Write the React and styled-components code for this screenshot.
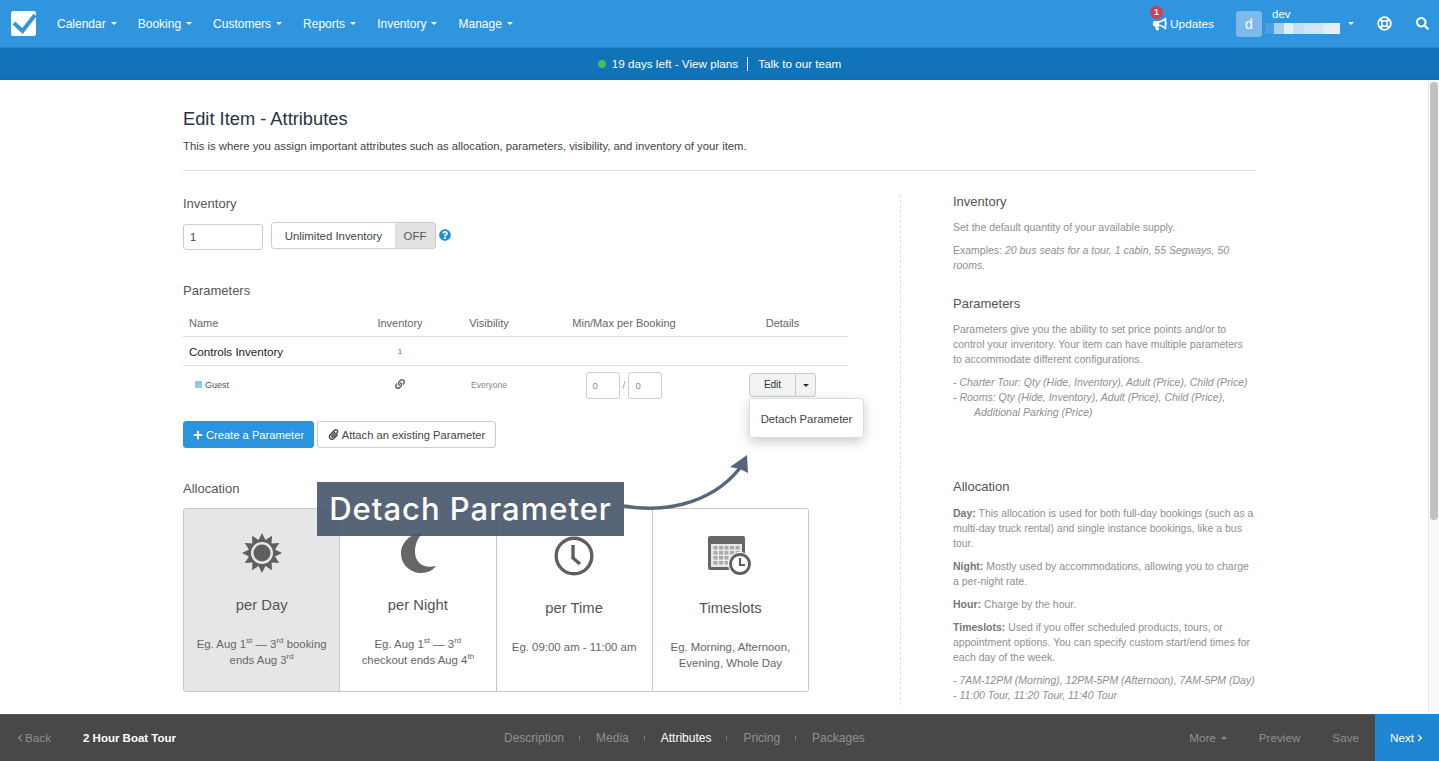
import React from "react";
import styled, { createGlobalStyle } from "styled-components";
import { FaBullhorn, FaLink, FaPaperclip, FaQuestionCircle, FaSearch, FaPlus, FaChevronLeft, FaChevronRight } from "react-icons/fa";

const GlobalStyle = createGlobalStyle`
	html, body {
		margin: 0;
		height: 100%;
		overflow: hidden;
		font-family: "Liberation Sans", Arial, sans-serif;
		color: #333;
		background: #fff;
	}
	#root { height: 100%; }
	* { box-sizing: border-box; }
`;

const Page = styled.div`
	height: 761px;
	display: flex;
	flex-direction: column;
`;

const TopBar = styled.header`
	height: 47px;
	flex: none;
	display: flex;
	align-items: center;
	background: #2f95de;
	color: #fff;
	font-size: 12px;
`;

const Logo = styled.svg`
	width: 25px;
	height: 25px;
	margin-left: 11px;
	margin-right: 21px;
`;

const MainNav = styled.nav`
	display: flex;
	gap: 21px;
`;

const NavItem = styled.span`
	display: flex;
	align-items: center;
	gap: 5px;
`;

const Caret = styled.i`
	display: inline-block;
	width: 0;
	height: 0;
	border-left: 3px solid transparent;
	border-right: 3px solid transparent;
	border-top: 3px solid ${(p) => p.$color || "currentColor"};
	${(p) => p.$up && `border-top: none; border-bottom: 3px solid ${p.$color || "currentColor"};`}
`;

const NavRight = styled.div`
	margin-left: auto;
	display: flex;
	align-items: center;
`;

const Updates = styled.span`
	position: relative;
	display: flex;
	align-items: center;
	gap: 3px;
	margin-right: 22px;
	font-size: 11.8px;
`;

const Badge = styled.b`
	position: absolute;
	left: -3px;
	top: -11px;
	width: 13px;
	height: 13px;
	border-radius: 50%;
	background: #d43f4f;
	font-size: 9px;
	line-height: 13px;
	text-align: center;
`;

const Avatar = styled.span`
	width: 26px;
	height: 26px;
	border-radius: 3px;
	background: #7db9ea;
	font-size: 14px;
	line-height: 26px;
	text-align: center;
	margin-right: 3px;
`;

const UserBlock = styled.div`
	width: 75px;
	display: flex;
	flex-direction: column;
	gap: 3px;
	font-size: 11.5px;
	margin-right: 8px;
`;

const UserName = styled.span`
	line-height: 12px;
	margin-top: -5px;
	padding-left: 7px;
`;

const BlurredEmail = styled.span`
	height: 11px;
	background: linear-gradient(90deg, #4b9fe0 0 12%, #a9d0f0 12% 25%, #e4effa 25% 38%, #c7ddf3 38% 52%, #d3e4f5 52% 77%, #e4effa 77% 100%);
`;

const NavIconButton = styled.span`
	display: flex;
	margin-left: ${(p) => p.$gap}px;
	margin-right: ${(p) => p.$end || 0}px;
`;

const TrialBar = styled.div`
	height: 33px;
	flex: none;
	display: flex;
	align-items: center;
	justify-content: center;
	background: #1174b8;
	border-top: 1px solid #2a81c3;
	border-bottom: 1px solid #0a6db5;
	color: #fff;
	font-size: 11.7px;
`;

const Dot = styled.i`
	width: 8px;
	height: 8px;
	border-radius: 50%;
	background: #3fc25a;
	margin-right: 6px;
`;

const TrialLink = styled.span`
	padding: ${(p) => (p.$last ? "0 0 0 10px" : "0 9px 0 0")};
	${(p) => !p.$last && "border-right: 1px solid #fff;"}
	line-height: 14px;
`;

const ContentArea = styled.main`
	flex: 1;
	min-height: 0;
	position: relative;
	overflow: hidden;
	padding: 0 184px 0 183px;
`;

const ScrollTrack = styled.div`
	position: absolute;
	right: 0;
	top: 0;
	bottom: 0;
	width: 11px;
	background: #fafafa;
	border-left: 1px solid #e8e8e8;
`;

const ScrollThumb = styled.div`
	margin: 2px 1px 0 1px;
	height: 438px;
	border-radius: 4px;
	background: #c2c2c2;
`;

const PageHeader = styled.div`
	padding-top: 29px;
	height: 91px;
	border-bottom: 1px solid #ddd;
`;

const Title = styled.h1`
	margin: 0;
	font-size: 18.3px;
	line-height: 20px;
	font-weight: 400;
	color: #2a3342;
`;

const Subtitle = styled.p`
	margin: 10px 0 0;
	font-size: 11.3px;
	line-height: 14px;
	color: #444;
`;

const Columns = styled.div`
	display: flex;
	margin-top: 24px;
`;

const FormColumn = styled.div`
	width: 718px;
	flex: none;
	padding-right: 52px;
	border-right: 1px dashed #ddd;
	height: 510px;
`;

const HelpColumn = styled.aside`
	flex: 1;
	margin-top: -1px;
	padding-left: 52px;
	font-size: 10.5px;
	line-height: 15px;
	color: #8f8f8f;
`;

const SectionLabel = styled.h2`
	margin: ${(p) => p.$top || 0}px 0 0;
	font-size: 13px;
	line-height: 16px;
	font-weight: 400;
	color: #555;
`;

const InventoryRow = styled.div`
	display: flex;
	align-items: center;
	margin-top: 12px;
`;

const TextInput = styled.div`
	width: ${(p) => p.$w}px;
	height: ${(p) => p.$h}px;
	border: 1px solid #ccc;
	border-radius: 3px;
	padding-left: 6px;
	font-size: ${(p) => p.$size}px;
	line-height: ${(p) => p.$h - 2}px;
	color: ${(p) => p.$color};
`;

const Toggle = styled.div`
	display: flex;
	width: 165px;
	height: 27px;
	margin: -3px 0 0 8px;
	border: 1px solid #ccc;
	border-radius: 3px;
	font-size: 11.4px;
	line-height: 27px;
	color: #444;
	overflow: hidden;
`;

const ToggleLabel = styled.span`
	flex: 1;
	text-align: center;
`;

const ToggleState = styled.span`
	width: 40px;
	background: #e2e2e2;
	text-align: center;
	color: #555;
`;

const HelpIcon = styled.span`
	display: flex;
	color: #1d8fe1;
	margin: -5px 0 0 3px;
`;

const ParamTable = styled.div`
	margin-top: 10px;
	width: 665px;
`;

const ParamRow = styled.div`
	display: grid;
	grid-template-columns: 178px 78px 100px 170px 1fr;
	align-items: center;
	height: ${(p) => p.$h}px;
	${(p) => !p.$plain && "border-bottom: 1px solid #ddd;"}
`;

const Cell = styled.div`
	text-align: ${(p) => (p.$left ? "left" : "center")};
	padding-left: ${(p) => (p.$left ? p.$indent || 6 : p.$shift || 0)}px;
	font-size: ${(p) => p.$size || 11}px;
	color: ${(p) => p.$color || "#666"};
`;

const Swatch = styled.i`
	display: inline-block;
	width: 7px;
	height: 7px;
	background: #8fcbee;
	margin-right: 3px;
`;

const MinMax = styled.div`
	display: flex;
	align-items: center;
	justify-content: center;
	gap: 3px;
	font-size: 10px;
	color: #999;
`;

const SplitButton = styled.div`
	position: relative;
	display: flex;
	width: 67px;
	height: 24px;
	margin-left: 40px;
	border: 1px solid #ccc;
	border-radius: 3px;
	background: #f1f3f4;
	font-size: 10px;
	line-height: 22px;
	color: #333;
`;

const SplitMain = styled.span`
	flex: 1;
	text-align: center;
	border-right: 1px solid #ccc;
`;

const SplitToggle = styled.span`
	width: 19px;
	display: flex;
	align-items: center;
	justify-content: center;
`;

const Menu = styled.div`
	position: absolute;
	left: -1px;
	top: 24px;
	width: 115px;
	height: 40px;
	background: #fff;
	border: 1px solid #ddd;
	border-radius: 3px;
	box-shadow: 0 4px 12px rgba(0, 0, 0, 0.2);
	font-size: 11.3px;
	line-height: 40px;
	text-align: center;
	color: #444;
	z-index: 3;
`;

const ButtonRow = styled.div`
	display: flex;
	gap: 3px;
	margin-top: 17px;
`;

const Button = styled.div`
	display: flex;
	align-items: center;
	justify-content: center;
	gap: 3px;
	height: 27px;
	width: ${(p) => p.$w}px;
	border-radius: 3px;
	font-size: 11.2px;
	background: ${(p) => (p.$primary ? "#2a94de" : "#fff")};
	color: ${(p) => (p.$primary ? "#fff" : "#444")};
	border: 1px solid ${(p) => (p.$primary ? "#2a94de" : "#ccc")};
`;

const AllocationCards = styled.div`
	display: flex;
	width: 626px;
	height: 184px;
	margin-top: 11px;
	border: 1px solid #c6c6c6;
	border-radius: 3px;
	overflow: hidden;
`;

const AllocationCard = styled.div`
	flex: 1;
	display: flex;
	flex-direction: column;
	align-items: center;
	padding-top: ${(p) => p.$top}px;
	background: ${(p) => (p.$active ? "#e6e6e6" : "#fff")};
	&:not(:first-child) { border-left: 1px solid #c6c6c6; }
`;

const CardIcon = styled.div`
	height: 44px;
	display: flex;
	align-items: center;
	justify-content: center;
`;

const CardName = styled.div`
	margin-top: 21px;
	font-size: 14.8px;
	line-height: 18px;
	color: #555;
`;

const CardNote = styled.div`
	margin-top: 22px;
	font-size: 11.4px;
	line-height: 16px;
	color: #666;
	text-align: center;
	sup { font-size: 8px; line-height: 0; }
`;

const Callout = styled.div`
	position: absolute;
	left: 317px;
	top: 402px;
	width: 307px;
	height: 54px;
	background: rgba(70, 84, 105, 0.9);
	color: #fff;
	font-family: Inter, sans-serif;
	font-size: 31px;
	font-weight: 500;
	letter-spacing: 1px;
	line-height: 53px;
	text-align: center;
	z-index: 4;
`;

const CalloutArrow = styled.svg`
	position: absolute;
	left: 624px;
	top: 370px;
	z-index: 4;
`;

const HelpTitle = styled.h3`
	margin: ${(p) => p.$top || 0}px 0 ${(p) => p.$below || 10}px;
	font-size: 13px;
	line-height: 16px;
	font-weight: 400;
	color: #555;
`;

const HelpText = styled.p`
	margin: 0 0 ${(p) => (p.$tight ? 0 : 8)}px;
	padding-left: ${(p) => p.$indent || 0}px;
	b { color: #777; }
`;

const BottomBar = styled.footer`
	height: 47px;
	flex: none;
	display: flex;
	align-items: center;
	padding-bottom: 1px;
	background: #484848;
	color: #8f8f8f;
	font-size: 11.7px;
	border-top: 1px solid #555;
`;

const BackLink = styled.span`
	display: flex;
	align-items: center;
	gap: 1px;
	width: 83px;
	padding-left: 16px;
`;

const TourName = styled.strong`
	color: #fff;
	font-size: 11.5px;
`;

const Steps = styled.nav`
	position: absolute;
	left: 504px;
	display: flex;
	align-items: center;
	font-size: 12px;
`;

const Step = styled.span`
	color: ${(p) => (p.$active ? "#fff" : "#8f8f8f")};
	&:not(:first-child)::before {
		content: "";
		display: inline-block;
		width: 1px;
		height: 5px;
		background: #777;
		margin: 0 16px 0 15px;
		vertical-align: 1px;
	}
`;

const BottomActions = styled.div`
	margin-left: auto;
	display: flex;
	align-items: center;
	align-self: stretch;
	gap: 32px;
`;

const ActionLink = styled.span`
	display: flex;
	align-items: center;
	gap: 5px;
`;

const NextButton = styled.span`
	align-self: stretch;
	width: 64px;
	margin: -1px 0 -1px -16px;
	display: flex;
	align-items: center;
	justify-content: center;
	gap: 2px;
	background: #1f86d3;
	color: #fff;
`;

const sunRays = Array.from({ length: 24 }, (_, i) => {
	const r = i % 2 === 0 ? 20 : 13.500;
	const a = (i * Math.PI) / 12 - Math.PI / 2;
	return (20 + r * Math.cos(a)).toFixed(2) + "," + (20 + r * Math.sin(a)).toFixed(2);
}).join(" ");

const SunIcon = () => (
	<svg width="40" height="40" viewBox="0 0 40 40">
		<polygon fill="#5f5f5f" points={sunRays} />
		<circle cx="20" cy="20" r="11" fill="#e6e6e6" />
		<circle cx="20" cy="20" r="8.500" fill="#5f5f5f" />
	</svg>
);

const MoonIcon = () => (
	<svg width="38" height="42" viewBox="0 0 38 42">
		<path fill="#666" d="M24 1C12 1 2 10 2 21.500S12 41 22 41c7 0 12-3 15-7-2 .6-4 .8-6 .8-9 0-15-6-15-14.800C16 12 19 5 24 1z" />
	</svg>
);

const ClockIcon = () => (
	<svg width="40" height="40" viewBox="0 0 40 40">
		<circle cx="20" cy="20" r="17.800" fill="none" stroke="#5f5f5f" strokeWidth="3.400" />
		<path d="M19 9v13l7 6" fill="none" stroke="#5f5f5f" strokeWidth="3.400" />
	</svg>
);

const TimeslotsIcon = () => (
	<svg width="44" height="42" viewBox="0 0 44 42">
		<rect x="0" y="1" width="37" height="34" rx="2" fill="#666" />
		<rect x="3" y="9" width="31" height="23" fill="#e8e8e8" />
		{[0, 1, 2, 3].map((row) =>
			[0, 1, 2, 3, 4].map((col) => (
				<rect key={row + "-" + col} x={5.500 + col * 5.500} y={11 + row * 5} width="4" height="3.500" fill="#aaa" />
			))
		)}
		<circle cx="32" cy="29" r="12" fill="#fff" />
		<circle cx="32" cy="29" r="9.500" fill="none" stroke="#5f5f5f" strokeWidth="2.800" />
		<path d="M32 23v7h5" fill="none" stroke="#5f5f5f" strokeWidth="2.200" />
	</svg>
);

const SupportIcon = () => (
	<svg width="15" height="15" viewBox="0 0 15 15" fill="none" stroke="#fff">
		<circle cx="7.500" cy="7.500" r="6.300" strokeWidth="1.800" />
		<circle cx="7.500" cy="7.500" r="2.800" strokeWidth="1.400" />
		<path d="M3 3l2.500 2.500M12 3L9.500 5.500M3 12l2.500-2.500M12 12L9.500 9.500" strokeWidth="2" />
	</svg>
);

export default function App() {
	return (
		<Page>
			<GlobalStyle />
			<TopBar>
				<Logo viewBox="0 0 25 25">
					<rect width="25" height="25" rx="2" fill="#fff" />
					<path d="M3 12l8.500 8L24 4" fill="none" stroke="#2f95de" strokeWidth="4" />
				</Logo>
				<MainNav>
					{["Calendar", "Booking", "Customers", "Reports", "Inventory", "Manage"].map((item) => (
						<NavItem key={item}>
							{item} <Caret />
						</NavItem>
					))}
				</MainNav>
				<NavRight>
					<Updates>
						<FaBullhorn size={14} />
						<Badge>1</Badge>
						Updates
					</Updates>
					<Avatar>d</Avatar>
					<UserBlock>
						<UserName>dev</UserName>
						<BlurredEmail />
					</UserBlock>
					<Caret />
					<NavIconButton $gap={23}>
						<SupportIcon />
					</NavIconButton>
					<NavIconButton $gap={24} $end={10}>
						<FaSearch size={13} />
					</NavIconButton>
				</NavRight>
			</TopBar>
			<TrialBar>
				<Dot />
				<TrialLink>19 days left - View plans</TrialLink>
				<TrialLink $last>Talk to our team</TrialLink>
			</TrialBar>
			<ContentArea>
				<PageHeader>
					<Title>Edit Item - Attributes</Title>
					<Subtitle>This is where you assign important attributes such as allocation, parameters, visibility, and inventory of your item.</Subtitle>
				</PageHeader>
				<Columns>
					<FormColumn>
						<SectionLabel $top={1}>Inventory</SectionLabel>
						<InventoryRow>
							<TextInput $w={80} $h={26} $size={11} $color="#444">1</TextInput>
							<Toggle>
								<ToggleLabel>Unlimited Inventory</ToggleLabel>
								<ToggleState>OFF</ToggleState>
							</Toggle>
							<HelpIcon>
								<FaQuestionCircle size={12} />
							</HelpIcon>
						</InventoryRow>
						<SectionLabel $top={33}>Parameters</SectionLabel>
						<ParamTable>
							<ParamRow $h={28}>
								<Cell $left>Name</Cell>
								<Cell>Inventory</Cell>
								<Cell>Visibility</Cell>
								<Cell>Min/Max per Booking</Cell>
								<Cell $shift={8}>Details</Cell>
							</ParamRow>
							<ParamRow $h={29}>
								<Cell $left $size={11.6} $color="#222">Controls Inventory</Cell>
								<Cell $size={8}>1</Cell>
								<Cell />
								<Cell />
								<Cell />
							</ParamRow>
							<ParamRow $h={38} $plain>
								<Cell $left $indent={12} $size={9} $color="#555">
									<Swatch />
									Guest
								</Cell>
								<Cell>
									<FaLink size={10} color="#666" />
								</Cell>
								<Cell $size={8.500} $color="#888">Everyone</Cell>
								<MinMax>
									<TextInput $w={34} $h={27} $size={9.500} $color="#888">0</TextInput>
									/
									<TextInput $w={34} $h={27} $size={9.500} $color="#888">0</TextInput>
								</MinMax>
								<div>
									<SplitButton>
										<SplitMain>Edit</SplitMain>
										<SplitToggle>
											<Caret $color="#333" />
										</SplitToggle>
										<Menu>Detach Parameter</Menu>
									</SplitButton>
								</div>
							</ParamRow>
						</ParamTable>
						<ButtonRow>
							<Button $primary $w={131}>
								<FaPlus size={10} />
								Create a Parameter
							</Button>
							<Button $w={179}>
								<FaPaperclip size={11} />
								Attach an existing Parameter
							</Button>
						</ButtonRow>
						<SectionLabel $top={33}>Allocation</SectionLabel>
						<AllocationCards>
							<AllocationCard $active $top={22}>
								<CardIcon>
									<SunIcon />
								</CardIcon>
								<CardName>per Day</CardName>
								<CardNote>
									Eg. Aug 1<sup>st</sup> — 3<sup>rd</sup> booking
									<br />
									ends Aug 3<sup>rd</sup>
								</CardNote>
							</AllocationCard>
							<AllocationCard $top={22}>
								<CardIcon>
									<MoonIcon />
								</CardIcon>
								<CardName>per Night</CardName>
								<CardNote>
									Eg. Aug 1<sup>st</sup> — 3<sup>rd</sup>
									<br />
									checkout ends Aug 4<sup>th</sup>
								</CardNote>
							</AllocationCard>
							<AllocationCard $top={25}>
								<CardIcon>
									<ClockIcon />
								</CardIcon>
								<CardName>per Time</CardName>
								<CardNote>Eg. 09:00 am - 11:00 am</CardNote>
							</AllocationCard>
							<AllocationCard $top={25}>
								<CardIcon>
									<TimeslotsIcon />
								</CardIcon>
								<CardName>Timeslots</CardName>
								<CardNote>
									Eg. Morning, Afternoon,
									<br />
									Evening, Whole Day
								</CardNote>
							</AllocationCard>
						</AllocationCards>
					</FormColumn>
					<HelpColumn>
						<HelpTitle>Inventory</HelpTitle>
						<HelpText>Set the default quantity of your available supply.</HelpText>
						<HelpText>
							Examples: <em>20 bus seats for a tour, 1 cabin, 55 Segways, 50 rooms.</em>
						</HelpText>
						<HelpTitle $top={23}>Parameters</HelpTitle>
						<HelpText>
							Parameters give you the ability to set price points and/or to control your inventory. Your item can have multiple parameters
							<br />
							to accommodate different configurations.
						</HelpText>
						<HelpText $tight>
							<em>- Charter Tour: Qty (Hide, Inventory), Adult (Price), Child (Price)</em>
						</HelpText>
						<HelpText $tight>
							<em>- Rooms: Qty (Hide, Inventory), Adult (Price), Child (Price),</em>
						</HelpText>
						<HelpText $indent={21}>
							<em>Additional Parking (Price)</em>
						</HelpText>
						<HelpTitle $top={59} $below={11}>Allocation</HelpTitle>
						<HelpText>
							<b>Day:</b> This allocation is used for both full-day bookings (such as a multi-day truck rental) and single instance bookings, like a bus tour.
						</HelpText>
						<HelpText>
							<b>Night:</b> Mostly used by accommodations, allowing you to charge a per-night rate.
						</HelpText>
						<HelpText>
							<b>Hour:</b> Charge by the hour.
						</HelpText>
						<HelpText>
							<b>Timeslots:</b> Used if you offer scheduled products, tours, or appointment options. You can specify custom start/end times for each day of the week.
						</HelpText>
						<HelpText $tight>
							<em>- 7AM-12PM (Morning), 12PM-5PM (Afternoon), 7AM-5PM (Day)</em>
						</HelpText>
						<HelpText $tight>
							<em>- 11:00 Tour, 11:20 Tour, 11:40 Tour</em>
						</HelpText>
					</HelpColumn>
				</Columns>
				<Callout>Detach Parameter</Callout>
				<CalloutArrow width="130" height="70" viewBox="0 0 130 70">
					<path d="M0 56C33 62 84 58 116 18" fill="none" stroke="#56667b" strokeWidth="3.500" />
					<path d="M106 17L123 5 124 23 116 19z" fill="#56667b" />
				</CalloutArrow>
				<ScrollTrack>
					<ScrollThumb />
				</ScrollTrack>
			</ContentArea>
			<BottomBar>
				<BackLink>
					<FaChevronLeft size={8} />
					Back
				</BackLink>
				<TourName>2 Hour Boat Tour</TourName>
				<Steps>
					<Step>Description</Step>
					<Step>Media</Step>
					<Step $active>Attributes</Step>
					<Step>Pricing</Step>
					<Step>Packages</Step>
				</Steps>
				<BottomActions>
					<ActionLink>
						More <Caret $up />
					</ActionLink>
					<ActionLink>Preview</ActionLink>
					<ActionLink>Save</ActionLink>
					<NextButton>
						Next <FaChevronRight size={8} />
					</NextButton>
				</BottomActions>
			</BottomBar>
		</Page>
	);
}
